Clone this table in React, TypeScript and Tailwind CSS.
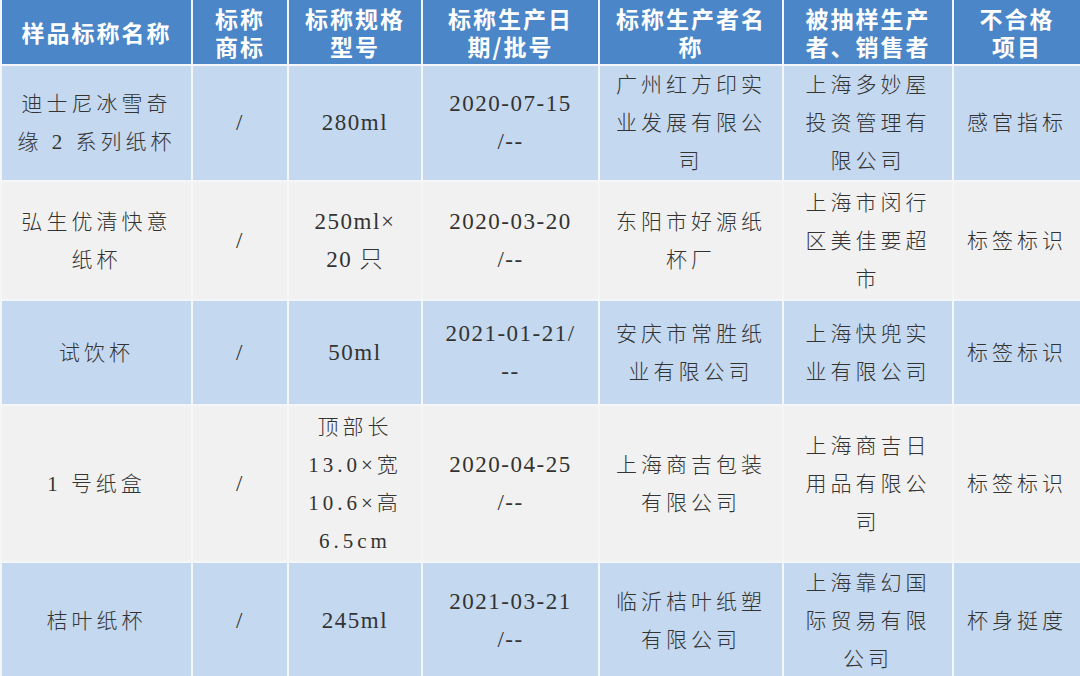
import React from "react";

type Cell = { lines: string[]; latin?: boolean };

const headers: string[][] = [
  ["样品标称名称"],
  ["标称", "商标"],
  ["标称规格", "型号"],
  ["标称生产日", "期/批号"],
  ["标称生产者名", "称"],
  ["被抽样生产", "者、销售者"],
  ["不合格", "项目"],
];

const rows: { h: string; bg: string; cells: Cell[] }[] = [
  {
    h: "h-[114px]",
    bg: "bg-[#c4d8ef]",
    cells: [
      { lines: ["迪士尼冰雪奇", "缘 2 系列纸杯"] },
      { lines: ["/"], latin: true },
      { lines: ["280ml"], latin: true },
      { lines: ["2020-07-15", "/--"], latin: true },
      { lines: ["广州红方印实", "业发展有限公", "司"] },
      { lines: ["上海多妙屋", "投资管理有", "限公司"] },
      { lines: ["感官指标"] },
    ],
  },
  {
    h: "h-[117px]",
    bg: "bg-[#f1f1f1]",
    cells: [
      { lines: ["弘生优清快意", "纸杯"] },
      { lines: ["/"], latin: true },
      { lines: ["250ml×", "20 只"], latin: true },
      { lines: ["2020-03-20", "/--"], latin: true },
      { lines: ["东阳市好源纸", "杯厂"] },
      { lines: ["上海市闵行", "区美佳要超", "市"] },
      { lines: ["标签标识"] },
    ],
  },
  {
    h: "h-[103px]",
    bg: "bg-[#c4d8ef]",
    cells: [
      { lines: ["试饮杯"] },
      { lines: ["/"], latin: true },
      { lines: ["50ml"], latin: true },
      { lines: ["2021-01-21/", "--"], latin: true },
      { lines: ["安庆市常胜纸", "业有限公司"] },
      { lines: ["上海快兜实", "业有限公司"] },
      { lines: ["标签标识"] },
    ],
  },
  {
    h: "h-[155px]",
    bg: "bg-[#f1f1f1]",
    cells: [
      { lines: ["1 号纸盒"] },
      { lines: ["/"], latin: true },
      { lines: ["顶部长", "13.0×宽", "10.6×高", "6.5cm"] },
      { lines: ["2020-04-25", "/--"], latin: true },
      { lines: ["上海商吉包装", "有限公司"] },
      { lines: ["上海商吉日", "用品有限公", "司"] },
      { lines: ["标签标识"] },
    ],
  },
  {
    h: "h-[116px]",
    bg: "bg-[#c4d8ef]",
    cells: [
      { lines: ["桔叶纸杯"] },
      { lines: ["/"], latin: true },
      { lines: ["245ml"], latin: true },
      { lines: ["2021-03-21", "/--"], latin: true },
      { lines: ["临沂桔叶纸塑", "有限公司"] },
      { lines: ["上海靠幻国", "际贸易有限", "公司"] },
      { lines: ["杯身挺度"] },
    ],
  },
];

const cols =
  "grid grid-cols-[189px_94px_132px_175px_182px_168px_126px] gap-x-[2px]";

export default function App() {
  return (
    <div className="w-[1080px] h-[676px] overflow-hidden bg-[#f4f6f9] pl-[2px]">
      <div className="flex flex-col gap-y-[2px]">
        <div className={`${cols} h-[64px]`}>
          {headers.map((h, i) => (
            <div
              key={i}
              className="bg-[#4a86c8] flex flex-col items-center justify-center text-white font-bold text-[23px] leading-[28px] tracking-[2px] font-['Noto_Sans_CJK_SC',sans-serif]"
            >
              {h.map((l, j) => (
                <div key={j} className="whitespace-nowrap">
                  {l}
                </div>
              ))}
            </div>
          ))}
        </div>
        {rows.map((r, ri) => (
          <div key={ri} className={`${cols} ${r.h}`}>
            {r.cells.map((c, ci) => (
              <div
                key={ci}
                className={`${r.bg} flex flex-col items-center justify-center text-[#333333] leading-[38px] font-['Liberation_Serif','Noto_Sans_CJK_SC',serif] font-light ${
                  c.latin ? "text-[23px] tracking-[1.5px]" : "text-[21px] tracking-[4px]"
                }`}
              >
                {c.lines.map((l, j) => (
                  <div key={j} className="whitespace-pre">
                    {l}
                  </div>
                ))}
              </div>
            ))}
          </div>
        ))}
      </div>
    </div>
  );
}
